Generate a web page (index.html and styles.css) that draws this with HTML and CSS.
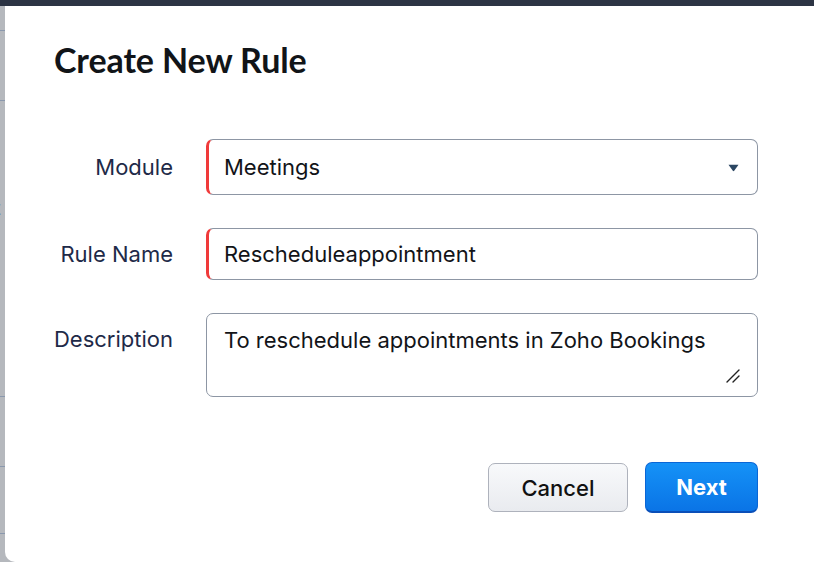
FILE: index.html
```html
<!DOCTYPE html>
<html>
<head>
<meta charset="utf-8">
<link rel="stylesheet" href="styles.css">
</head>
<body>
<div class="topbar"></div>
<div class="main">
  <div class="sidebar"><span class="sb-t">t</span></div>
  <div class="dialog">
    <h1 class="title">Create New Rule</h1>
    <div class="form">
      <label class="label label-module">Module</label>
      <div class="field field-select required">
        <span class="value">Meetings</span>
        <svg class="caret" width="11" height="8" viewBox="0 0 11 8"><path d="M0.5 0.8 H10.5 L6.2 6.8 Q5.5 7.6 4.8 6.8 Z" fill="#2b4662"/></svg>
      </div>
      <label class="label label-name">Rule Name</label>
      <div class="field field-input required">
        <span class="value">Rescheduleappointment</span>
      </div>
      <label class="label label-desc">Description</label>
      <div class="field field-textarea">
        <span class="value">To reschedule appointments in Zoho Bookings</span>
        <svg class="grip" width="14" height="14" viewBox="0 0 14 14"><path d="M1 13 L13 1 M7 13 L13 7" stroke="#222" stroke-width="1.4" stroke-linecap="round" fill="none"/></svg>
      </div>
    </div>
    <div class="actions">
      <button class="btn btn-cancel">Cancel</button>
      <button class="btn btn-next">Next</button>
    </div>
  </div>
</div>
</body>
</html>
```

FILE: styles.css
```css
* { box-sizing: border-box; }
html, body { margin: 0; padding: 0; }
body {
  width: 814px;
  height: 562px;
  overflow: hidden;
  background: #b5b8bd;
  font-family: Inter, "Open Sans", "Liberation Sans", sans-serif;
  display: flex;
  flex-direction: column;
}
.topbar {
  height: 6px;
  background: #2c3444;
  flex: none;
}
.main {
  flex: 1;
  display: flex;
}
.sidebar {
  width: 5px;
  flex: none;
  overflow: hidden;
  background:
    linear-gradient(#8a98ad, #8a98ad) 0 24px / 100% 1px no-repeat,
    linear-gradient(#8a98ad, #8a98ad) 0 94px / 100% 1px no-repeat,
    linear-gradient(#8a98ad, #8a98ad) 0 390px / 100% 1px no-repeat,
    linear-gradient(#8a98ad, #8a98ad) 0 460px / 100% 1px no-repeat,
    linear-gradient(#8a98ad, #8a98ad) 0 527px / 100% 1px no-repeat,
    #b5b8bd;
  padding-top: 190px;
}
.sb-t {
  display: block;
  margin-left: -6px;
  font-size: 20px;
  line-height: 24px;
  color: #1b2333;
}
.dialog {
  flex: 1;
  background: #ffffff;
  border-bottom-left-radius: 10px;
  padding: 34px 56px 0 49px;
  display: flex;
  flex-direction: column;
}
.title {
  margin: 0;
  font-family: Lato, Inter, sans-serif;
  font-weight: 700;
  font-size: 34px;
  line-height: 40px;
  color: #111418;
  letter-spacing: -0.1px;
}
.form {
  margin-top: 59px;
  display: grid;
  grid-template-columns: 119px 552px;
  column-gap: 33px;
  row-gap: 33px;
}
.label {
  justify-self: end;
  font-size: 22px;
  line-height: 26px;
  color: #1e2a48;
  white-space: nowrap;
}
.label-module, .label-name { align-self: center; }
.label-desc { align-self: start; padding-top: 13px; }
.field {
  border: 1px solid #8d96a4;
  border-radius: 7px;
  background: #fff;
  display: flex;
  align-items: center;
  padding: 0 24px 0 17px;
  font-size: 22px;
  line-height: 26px;
  color: #121418;
  white-space: nowrap;
}
.required { border-left: 3px solid #f03a3a; padding-left: 15px; }
.field-select { height: 56px; justify-content: space-between; padding-right: 18px; }
.field-input { height: 52px; }
.field-textarea {
  height: 84px;
  align-items: flex-start;
  justify-content: space-between;
  padding-top: 13px;
  padding-left: 17px;
  padding-right: 17px;
}
.caret { margin-top: 1px; }
.grip { align-self: flex-end; margin-bottom: 13px; }
.actions {
  margin-top: 65px;
  display: flex;
  justify-content: flex-end;
  gap: 17px;
  width: 704px;
}
.btn {
  font-family: Inter, "Open Sans", sans-serif;
  font-size: 22px;
  line-height: 26px;
  border-radius: 7px;
  cursor: pointer;
  padding: 0;
}
.btn-cancel {
  width: 140px;
  height: 49px;
  margin-top: 1px;
  background: linear-gradient(#f8f9fb, #e9ebef);
  border: 1px solid #aeb2bc;
  color: #111;
  font-weight: 500;
}
.btn-next {
  width: 113px;
  height: 51px;
  background: linear-gradient(#1592f7, #0a74e6);
  border: 1px solid #0a66d6;
  border-bottom: 2px solid #0a4fb8;
  color: #fff;
  font-weight: 700;
}
```
